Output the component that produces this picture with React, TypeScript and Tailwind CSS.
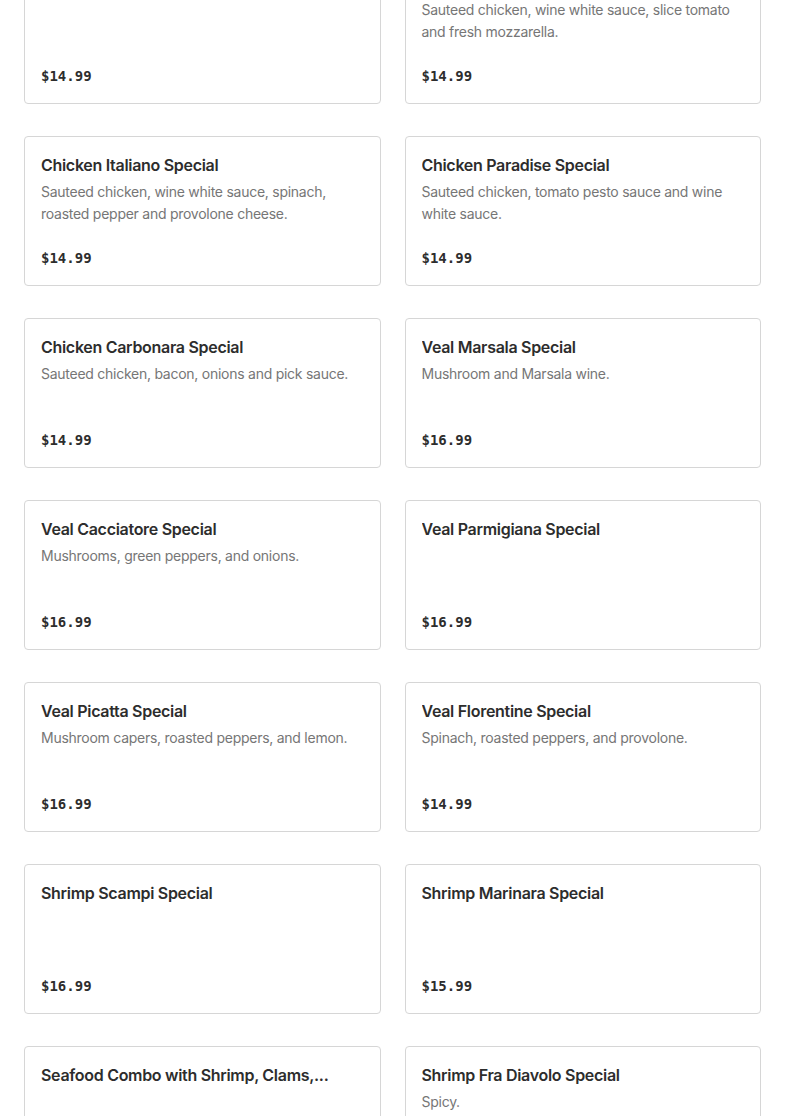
import React from 'react';

type Item = { name: string; desc?: string; price: string };

const items: Item[] = [
  { name: 'Chicken Parmigiana Special', price: '$14.99' },
  { name: 'Chicken Sorrentino Special', desc: 'Sauteed chicken, wine white sauce, slice tomato and fresh mozzarella.', price: '$14.99' },
  { name: 'Chicken Italiano Special', desc: 'Sauteed chicken, wine white sauce, spinach, roasted pepper and provolone cheese.', price: '$14.99' },
  { name: 'Chicken Paradise Special', desc: 'Sauteed chicken, tomato pesto sauce and wine white sauce.', price: '$14.99' },
  { name: 'Chicken Carbonara Special', desc: 'Sauteed chicken, bacon, onions and pick sauce.', price: '$14.99' },
  { name: 'Veal Marsala Special', desc: 'Mushroom and Marsala wine.', price: '$16.99' },
  { name: 'Veal Cacciatore Special', desc: 'Mushrooms, green peppers, and onions.', price: '$16.99' },
  { name: 'Veal Parmigiana Special', price: '$16.99' },
  { name: 'Veal Picatta Special', desc: 'Mushroom capers, roasted peppers, and lemon.', price: '$16.99' },
  { name: 'Veal Florentine Special', desc: 'Spinach, roasted peppers, and provolone.', price: '$14.99' },
  { name: 'Shrimp Scampi Special', price: '$16.99' },
  { name: 'Shrimp Marinara Special', price: '$15.99' },
  { name: 'Seafood Combo with Shrimp, Clams,...', price: '$18.99' },
  { name: 'Shrimp Fra Diavolo Special', desc: 'Spicy.', price: '$15.99' },
];

const MenuCard: React.FC<{ item: Item }> = ({ item }) => (
  <div className="h-[150px] border border-[#d6d6d6] rounded-[4px] bg-white p-4 flex flex-col justify-between">
    <div>
      <h3 className="text-[16px] leading-6 font-semibold tracking-[-0.3px] text-[#2d2d2d] truncate">{item.name}</h3>
      {item.desc && (
        <p className="mt-1 text-[14px] leading-[22px] tracking-[-0.26px] text-[#767676]">{item.desc}</p>
      )}
    </div>
    <div className="text-[14px] leading-[22px] font-bold text-[#2d2d2d] font-['DejaVu_Sans_Mono',monospace]">{item.price}</div>
  </div>
);

export default function App() {
  return (
    <div className="h-[1116px] overflow-hidden bg-white font-['Inter',sans-serif]">
      <div className="mt-[-46px] px-6 grid grid-cols-2 gap-x-6 gap-y-8">
        {items.map((it) => (
          <MenuCard key={it.name} item={it} />
        ))}
      </div>
    </div>
  );
}
